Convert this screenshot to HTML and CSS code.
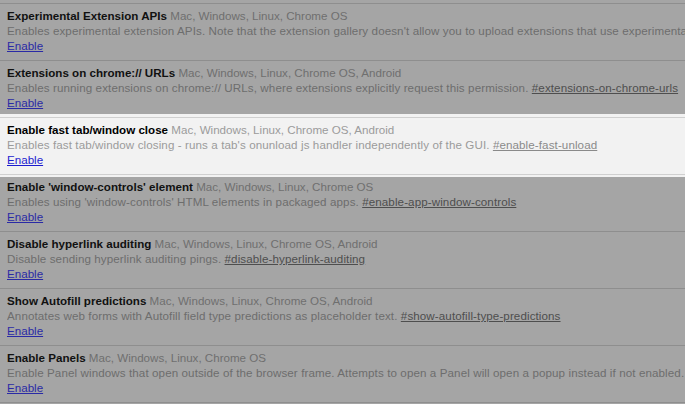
FILE: index.html
```html
<!DOCTYPE html>
<html>
<head>
<meta charset="utf-8">
<link rel="stylesheet" href="styles.css">
</head>
<body>
<div class="list">
  <div class="exp">
    <div><span class="name">Experimental Extension APIs</span> <span class="plat">Mac, Windows, Linux, Chrome OS</span></div>
    <div class="desc">Enables experimental extension APIs. Note that the extension gallery doesn't allow you to upload extensions that use experimental APIs. <a class="perma" href="#">#extension-apis</a></div>
    <div><a class="act" href="#">Enable</a></div>
  </div>
  <div class="exp">
    <div><span class="name">Extensions on chrome:// URLs</span> <span class="plat">Mac, Windows, Linux, Chrome OS, Android</span></div>
    <div class="desc">Enables running extensions on chrome:// URLs, where extensions explicitly request this permission. <a class="perma" href="#">#extensions-on-chrome-urls</a></div>
    <div><a class="act" href="#">Enable</a></div>
  </div>
  <div class="exp ref">
    <div><span class="name">Enable fast tab/window close</span> <span class="plat">Mac, Windows, Linux, Chrome OS, Android</span></div>
    <div class="desc">Enables fast tab/window closing - runs a tab's onunload js handler independently of the GUI. <a class="perma" href="#">#enable-fast-unload</a></div>
    <div><a class="act" href="#">Enable</a></div>
  </div>
  <div class="exp">
    <div><span class="name">Enable 'window-controls' element</span> <span class="plat">Mac, Windows, Linux, Chrome OS</span></div>
    <div class="desc">Enables using 'window-controls' HTML elements in packaged apps. <a class="perma" href="#">#enable-app-window-controls</a></div>
    <div><a class="act" href="#">Enable</a></div>
  </div>
  <div class="exp">
    <div><span class="name">Disable hyperlink auditing</span> <span class="plat">Mac, Windows, Linux, Chrome OS, Android</span></div>
    <div class="desc">Disable sending hyperlink auditing pings. <a class="perma" href="#">#disable-hyperlink-auditing</a></div>
    <div><a class="act" href="#">Enable</a></div>
  </div>
  <div class="exp">
    <div><span class="name">Show Autofill predictions</span> <span class="plat">Mac, Windows, Linux, Chrome OS, Android</span></div>
    <div class="desc">Annotates web forms with Autofill field type predictions as placeholder text. <a class="perma" href="#">#show-autofill-type-predictions</a></div>
    <div><a class="act" href="#">Enable</a></div>
  </div>
  <div class="exp">
    <div><span class="name">Enable Panels</span> <span class="plat">Mac, Windows, Linux, Chrome OS</span></div>
    <div class="desc">Enable Panel windows that open outside of the browser frame. Attempts to open a Panel will open a popup instead if not enabled.</div>
    <div><a class="act" href="#">Enable</a></div>
  </div>
  <div class="exp end"></div>
</div>
</body>
</html>
```

FILE: styles.css
```css
html, body {
  margin: 0;
  padding: 0;
  background: #a5a5a5;
  overflow: hidden;
}
body {
  width: 685px;
  height: 404px;
  font-family: "Liberation Sans", Arial, sans-serif;
  font-size: 11.6px;
  line-height: 15px;
}
.list {
  padding-top: 3px;
  white-space: nowrap;
  overflow: hidden;
  height: 401px;
}
.exp {
  border-top: 1px solid #8e8e8e;
  padding: 4px 0 7px 7px;
  height: 45px;
  color: #6f6f6f;
  overflow: hidden;
}
.end {
  height: 0;
  padding: 0;
}
.name {
  font-weight: bold;
  color: #111;
}
.plat {
  color: #6f6f6f;
}
.desc {
  color: #6d6d6d;
  letter-spacing: 0.1px;
  overflow: hidden;
}
.perma {
  color: #4e4e4e;
  text-decoration: underline;
}
.act {
  color: #2a2aa6;
  text-decoration: underline;
}
.ref {
  position: relative;
  z-index: 1;
  overflow: visible;
  background: #f2f2f2;
  border-top-color: #cfcfcf;
  box-shadow: 0 -3px 0 #f2f2f2, 0 1px 0 #d0d0d0, 0 3px 0 #f2f2f2;
}
.ref .name { color: #000; }
.ref .plat, .ref .desc { color: #9b9b9b; }
.ref .perma { color: #8a8a8a; }
.ref .act { color: #1c1cd0; }
```
